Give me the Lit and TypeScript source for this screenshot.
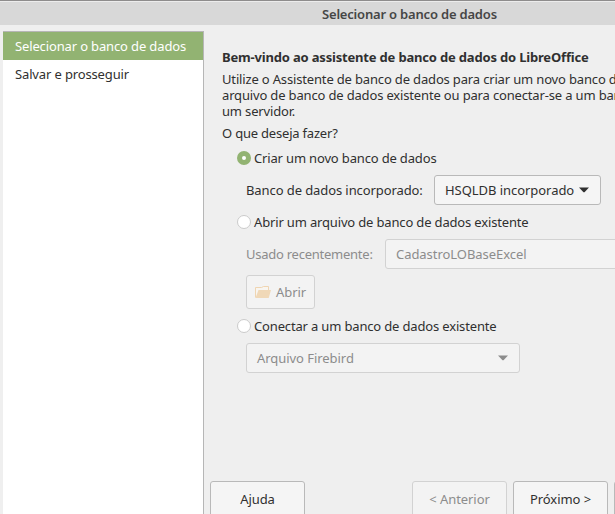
import { LitElement, html, css } from "lit";
import { customElement } from "lit/decorators.js";

const caret = html`<svg class="caret" width="10" height="6" viewBox="0 0 10 6"><path d="M0 .4h10L5.5 5.3h-1z" fill="currentColor"/></svg>`;

@customElement("app-root")
export class AppRoot extends LitElement {
  static styles = css`
    * { box-sizing: border-box; }
    :host {
      display: flex; flex-direction: column; width: 615px; height: 514px; overflow: hidden;
      background: #efefef; color: #303030;
      font: 13px/16px "Noto Sans", sans-serif; white-space: nowrap;
    }
    .title {
      flex: none; height: 25px; border-top: 1px solid #8e8c8c; box-shadow: inset 0 1px #ececec;
      background: #d8d8d8; color: #464646; font-weight: 600; padding: 5px 0 0 322px; letter-spacing: -.19px;
    }
    .body { flex: 1; display: flex; padding: 6px 0 0 3px; min-height: 0; }
    .side { flex: none; width: 201px; background: #fff; border: solid #b6b6b6; border-width: 1px 1px 0 0; }
    .step { height: 28px; padding: 6px 0 0 12px; letter-spacing: -.14px; }
    .step.on { background: #92b372; color: #fff; }
    .main { flex: none; width: 411px; display: flex; flex-direction: column; overflow: hidden; }
    .page { flex: 1; padding: 18px 0 0 18px; }
    .head { font-weight: 700; height: 22px; letter-spacing: -.18px; }
    .para { height: 54px; letter-spacing: -.16px; }
    .ask { letter-spacing: -.2px; }
    .opt { display: flex; align-items: center; gap: 3px; height: 16px; padding-left: 15px; margin-top: 9px; letter-spacing: -.16px; }
    .radio { width: 14px; height: 14px; border-radius: 50%; background: #fff; border: 1px solid #cbcbcb; }
    .radio.on { border: 5px solid #92b372; }
    .row { display: flex; align-items: center; padding-left: 24px; }
    .label { flex: none; letter-spacing: -.09px; }
    .box {
      flex: none; display: flex; align-items: center; height: 30px; letter-spacing: -.05px;
      border: 1px solid #b9b9b9; border-radius: 3px; background: #f5f5f5; padding: 0 11px 0 10px;
    }
    .caret { margin-left: auto; }
    .dim { color: #8c8c8c; border-color: #d2d2d2; background-color: #f3f3f3; }
    .label.dim { background: none; letter-spacing: -.25px; }
    .one { margin-top: 9px; } .one .label { width: 188px; } .one .box { width: 167px; }
    .two { margin-top: 9px; } .two .label { width: 139px; } .two .box { width: 260px; }
    .open { margin-top: 6px; } .open .box { width: 69px; height: 34px; gap: 5px; padding: 0 0 0 8px; }
    .three { margin-top: 9px; } .three .box { width: 274px; }
    .foot { flex: none; height: 33px; padding-left: 6px; display: flex; }
    .foot .box { width: 95px; height: 36px; justify-content: center; padding: 0; margin-right: 6px; }
    .foot .help { margin-right: 107px; }
  `;

  render() {
    return html`
      <div class="title">Selecionar o banco de dados</div>
      <div class="body">
        <div class="side">
          <div class="step on">Selecionar o banco de dados</div>
          <div class="step">Salvar e prosseguir</div>
        </div>
        <div class="main">
          <div class="page">
            <div class="head">Bem-vindo ao assistente de banco de dados do LibreOffice</div>
            <div class="para">
              <div>Utilize o Assistente de banco de dados para criar um novo banco d</div>
              <div>arquivo de banco de dados existente ou para conectar-se a um ban</div>
              <div>um servidor.</div>
            </div>
            <div class="ask">O que deseja fazer?</div>
            <div class="opt"><span class="radio on"></span><span>Criar um novo banco de dados</span></div>
            <div class="row one"><span class="label">Banco de dados incorporado:</span>
              <div class="box">HSQLDB incorporado${caret}</div></div>
            <div class="opt"><span class="radio"></span><span>Abrir um arquivo de banco de dados existente</span></div>
            <div class="row two"><span class="label dim">Usado recentemente:</span>
              <div class="box dim">CadastroLOBaseExcel</div></div>
            <div class="row open"><div class="box dim">
              <svg width="16" height="14" viewBox="0 0 16 14"><path d="M.5 12.5V2.5h6l2-1h5V5" fill="#f8f5f0" stroke="#efd5b2"/><path d="M3.5 5H16l-2.3 8H.5z" fill="#f0d8b7"/></svg>
              <span>Abrir</span></div></div>
            <div class="opt"><span class="radio"></span><span>Conectar a um banco de dados existente</span></div>
            <div class="row three"><div class="box dim">Arquivo Firebird${caret}</div></div>
          </div>
          <div class="foot">
            <div class="box help">Ajuda</div>
            <div class="box dim">&lt; Anterior</div>
            <div class="box">Próximo &gt;</div>
            <div class="box"></div>
          </div>
        </div>
      </div>`;
  }
}
